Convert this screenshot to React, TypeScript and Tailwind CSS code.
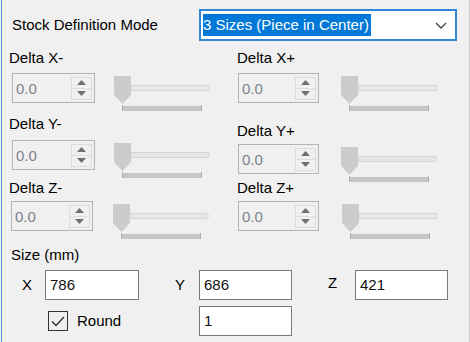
import React from 'react';

const font = { fontFamily: '"Liberation Sans", Arial, sans-serif' };

function Spinner({ width }: { width: string }) {
  return (
    <div className={`${width} h-[30px] flex items-center border border-[#b4b4b4] bg-[#f0f0f0]`}>
      <span className="flex-1 pl-[3px] text-[15px] text-[#7d828c] leading-none">0.0</span>
      <div className="flex flex-col w-[21px] h-[23px] mr-[2px]">
        <div className="flex-1 flex items-center justify-center border border-[#dcdcdc] bg-[#f0f0f0]">
          <svg width="9" height="5" viewBox="0 0 9 5">
            <polygon points="0,5 4.5,0 9,5" fill="#6e6e6e" />
          </svg>
        </div>
        <div className="flex-1 flex items-center justify-center border border-t-0 border-[#dcdcdc] bg-[#f0f0f0]">
          <svg width="9" height="5" viewBox="0 0 9 5">
            <polygon points="0,0 9,0 4.5,5" fill="#6e6e6e" />
          </svg>
        </div>
      </div>
    </div>
  );
}

function Slider({ gap }: { gap: string }) {
  return (
    <svg width="96" height="37" viewBox="0 0 96 37" className={`${gap} mt-[3px] shrink-0`}>
      <rect x="17" y="9.5" width="78" height="5" fill="#e6e6e6" stroke="#d6d6d6" />
      <polygon points="0,0 17,0 17,19 8.5,28 0,19" fill="#cccccc" />
      <rect x="8" y="30" width="80" height="5" fill="#c6c6c6" />
      <rect x="8" y="29" width="1" height="6" fill="#b0b0b0" />
      <rect x="87" y="29" width="1" height="6" fill="#b0b0b0" />
    </svg>
  );
}

function Delta({
  label,
  labelMt,
  rowMt,
  spinW,
  spinMl,
  gap,
}: {
  label: string;
  labelMt: string;
  rowMt: string;
  spinW: string;
  spinMl: string;
  gap: string;
}) {
  return (
    <div className="flex flex-col">
      <div className={`${labelMt} h-[18px] leading-[18px] text-[15px] text-black`}>{label}</div>
      <div className={`${rowMt} ${spinMl} h-[30px] flex items-start`}>
        <Spinner width={spinW} />
        <Slider gap={gap} />
      </div>
    </div>
  );
}

function TextBox({ value, width }: { value: string; width: string }) {
  return (
    <div className={`${width} h-[30px] flex items-center border border-[#7a7a7a] bg-white pl-[4px] text-[15px] text-[#111]`}>
      {value}
    </div>
  );
}

export default function App() {
  return (
    <div className="w-[470px] h-[342px] bg-[#f0f0f0]" style={font}>
      <div className="ml-[1px] h-full border-l border-r border-l-[#4b93db] border-r-[#c9c9c9] flex flex-col">
        {/* Mode selector */}
        <div className="flex items-center pt-[9px] pl-[10px]">
          <div className="w-[187px] text-[15px] text-black">Stock Definition Mode</div>
          <div className="w-[258px] h-[32px] border-2 border-[#2f87dc] bg-white flex items-center pl-[2px] pr-[8px]">
            <span className="bg-[#0078d7] text-white text-[15px] h-[22px] leading-[22px] pr-[2px]">
              3 Sizes (Piece in Center)
            </span>
            <svg width="12" height="7" viewBox="0 0 12 7" className="ml-auto">
              <polyline points="1,1 6,6 11,1" fill="none" stroke="#404040" strokeWidth="1.3" />
            </svg>
          </div>
        </div>

        {/* Deltas */}
        <div className="grid grid-cols-[228px_1fr] pl-[7px]">
          <div className="flex flex-col">
            <Delta label="Delta X-" labelMt="mt-[8px]" rowMt="mt-[6px]" spinW="w-[83px]" spinMl="ml-[3px]" gap="ml-[19px]" />
            <Delta label="Delta Y-" labelMt="mt-[12px]" rowMt="mt-[7px]" spinW="w-[83px]" spinMl="ml-[3px]" gap="ml-[19px]" />
            <Delta label="Delta Z-" labelMt="mt-[9px]" rowMt="mt-[4px]" spinW="w-[82px]" spinMl="ml-[2px]" gap="ml-[20px]" />
          </div>
          <div className="flex flex-col">
            <Delta label="Delta X+" labelMt="mt-[8px]" rowMt="mt-[6px]" spinW="w-[81px]" spinMl="ml-[1px]" gap="ml-[22px]" />
            <Delta label="Delta Y+" labelMt="mt-[19px]" rowMt="mt-[4px]" spinW="w-[81px]" spinMl="ml-[1px]" gap="ml-[22px]" />
            <Delta label="Delta Z+" labelMt="mt-[5px]" rowMt="mt-[4px]" spinW="w-[81px]" spinMl="ml-[1px]" gap="ml-[23px]" />
          </div>
        </div>

        {/* Size */}
        <div className="mt-[15px] pl-[9px] h-[18px] leading-[18px] text-[15px] text-black">Size (mm)</div>
        <div className="mt-[6px] flex items-center text-[15px] text-black">
          <div className="w-[43px] pl-[20px]">X</div>
          <TextBox value="786" width="w-[94px]" />
          <div className="w-[60px] pl-[36px]">Y</div>
          <TextBox value="686" width="w-[93px]" />
          <div className="w-[63px] pl-[36px] mb-[4px]">Z</div>
          <TextBox value="421" width="w-[93px]" />
        </div>
        <div className="mt-[6px] flex items-center text-[15px] text-black">
          <div className="w-[197px] pl-[46px] flex items-center">
            <div className="w-[20px] h-[20px] border-[1.5px] border-[#333] bg-[#f0f0f0] flex items-center justify-center">
              <svg width="14" height="11" viewBox="0 0 14 11">
                <polyline points="1,5.5 5,9.5 13,1" fill="none" stroke="#333" strokeWidth="1.4" />
              </svg>
            </div>
            <span className="ml-[9px]">Round</span>
          </div>
          <TextBox value="1" width="w-[93px]" />
        </div>
      </div>
    </div>
  );
}
